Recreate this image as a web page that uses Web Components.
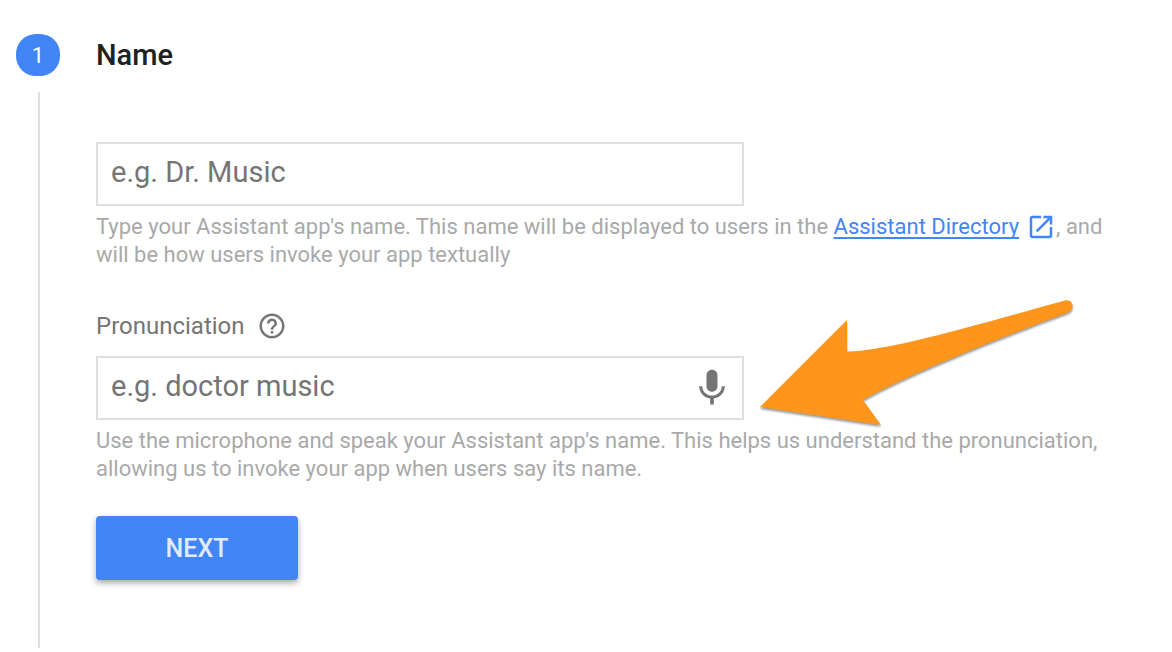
<!DOCTYPE html>
<html lang="en">
<head>
<meta charset="utf-8">
<meta name="viewport" content="width=device-width, initial-scale=1">
<title>Name</title>
<style>
	body {
		margin: 0;
		background: #fff;
		color: #757575;
		font-family: Roboto, "Liberation Sans", sans-serif;
		--accent-color: #4285f4;
		--border-color: #e0e0e0;
		--hint-color: #a9a9a9;
	}
</style>
</head>
<body>

<setup-step number="1">
	<span slot="title">Name</span>

	<text-field placeholder="e.g. Dr. Music" label="Name">
		<span slot="hint">Type your Assistant app's name. This name will be displayed to users in the <external-link href="#directory">Assistant Directory</external-link>, and will be how users invoke your app textually</span>
	</text-field>

	<text-field placeholder="e.g. doctor music" label="Pronunciation" show-label>
		<help-button slot="help"></help-button>
		<mic-button slot="action"></mic-button>
		<pointer-arrow slot="overlay"></pointer-arrow>
		<span slot="hint">Use the microphone and speak your Assistant app's name. This helps us understand the pronunciation, allowing us to invoke your app when users say its name.</span>
	</text-field>

	<raised-button>NEXT</raised-button>
</setup-step>

<script>
class BaseElement extends HTMLElement {

	constructor() {
		super();
		this.attachShadow({ mode: 'open' });
		this.shadowRoot.innerHTML = this.constructor.styles + this.template();
	}

	template() {
		return '<slot></slot>';
	}

}

class SetupStep extends BaseElement {

	static get styles() {
		return `
			<style>
				:host {
					display: grid;
					grid-template-columns: 44px minmax(0, 1fr);
					grid-template-rows: auto 1fr;
					column-gap: 36px;
					row-gap: 16px;
					min-height: 100vh;
					box-sizing: border-box;
					padding: 34px 56px 4px 16px;
				}
				.badge {
					display: flex;
					align-items: center;
					justify-content: center;
					height: 42px;
					border-radius: 20px;
					background: var(--accent-color);
					color: #fff;
					font-size: 22px;
				}
				h2 {
					margin: 0;
					align-self: center;
					color: #212121;
					font-size: 29px;
					line-height: 32px;
					font-weight: 500;
				}
				.rail {
					margin-left: 22px;
					border-left: 2px solid var(--border-color);
				}
				.content {
					display: flex;
					flex-direction: column;
					align-items: flex-start;
					gap: 33px;
					padding: 50px 0 64px;
				}
			</style>
		`;
	}

	template() {
		return `
			<div class="badge">${this.getAttribute('number')}</div>
			<h2><slot name="title"></slot></h2>
			<div class="rail"></div>
			<div class="content"><slot></slot></div>
		`;
	}

}

class TextField extends BaseElement {

	static get styles() {
		return `
			<style>
				:host {
					display: block;
					width: 100%;
				}
				.label {
					display: flex;
					align-items: center;
					gap: 12px;
					height: 48px;
					padding-bottom: 6px;
					font-size: 24px;
				}
				.box {
					position: relative;
					display: flex;
					align-items: center;
					max-width: 648px;
					height: 64px;
					box-sizing: border-box;
					border: 2px solid var(--border-color);
				}
				input {
					flex: 1;
					min-width: 0;
					height: 100%;
					box-sizing: border-box;
					padding: 0 13px 4px;
					border: 0;
					outline: 0;
					background: none;
					color: #212121;
					font-family: inherit;
					font-size: 29px;
				}
				input::placeholder {
					color: #757575;
					opacity: 1;
				}
				.hint {
					margin: 0;
					padding-top: 7px;
					color: var(--hint-color);
					font-size: 22px;
					line-height: 28px;
				}
			</style>
		`;
	}

	template() {
		const label = this.getAttribute('label');
		const visible = this.hasAttribute('show-label');

		return `
			${visible ? `<div class="label"><label for="input">${label}</label><slot name="help"></slot></div>` : ''}
			<div class="box">
				<input id="input" type="text" placeholder="${this.getAttribute('placeholder')}" ${visible ? '' : `aria-label="${label}"`}>
				<slot name="action"></slot>
				<slot name="overlay"></slot>
			</div>
			<p class="hint"><slot name="hint"></slot></p>
		`;
	}

}

class ExternalLink extends BaseElement {

	static get styles() {
		return `
			<style>
				:host {
					display: inline;
				}
				a {
					color: var(--accent-color);
					text-decoration: none;
				}
				span {
					text-decoration: underline;
					text-decoration-thickness: 2px;
					text-underline-offset: 3px;
					text-decoration-skip-ink: none;
				}
				svg {
					width: 30px;
					height: 30px;
					margin: -4px 0 -4px 7px;
					vertical-align: -4px;
					fill: currentColor;
				}
			</style>
		`;
	}

	template() {
		return `<a href="${this.getAttribute('href')}"><span><slot></slot></span><svg viewBox="0 0 24 24" aria-hidden="true"><path d="M19 19H5V5h7V3H5c-1.11 0-2 .9-2 2v14c0 1.1.89 2 2 2h14c1.1 0 2-.9 2-2v-7h-2v7zM14 3v2h3.59l-9.83 9.83 1.41 1.41L19 6.41V10h2V3h-7z"/></svg></a>`;
	}

}

class IconButton extends BaseElement {

	static get styles() {
		return `
			<style>
				:host {
					display: flex;
				}
				button {
					display: flex;
					padding: 0;
					border: 0;
					background: none;
					color: #757575;
					cursor: pointer;
				}
				svg {
					width: ${this.size}px;
					height: ${this.size}px;
					fill: currentColor;
				}
			</style>
		`;
	}

	template() {
		const { label, path } = this.constructor;
		return `<button type="button" aria-label="${label}"><svg viewBox="0 0 24 24"><path d="${path}"/></svg></button>`;
	}

}

class HelpButton extends IconButton {
	static size = 30;
	static label = 'Help';
	static path = 'M11 18h2v-2h-2v2zm1-16C6.48 2 2 6.48 2 12s4.48 10 10 10 10-4.48 10-10S17.52 2 12 2zm0 18c-4.41 0-8-3.59-8-8s3.59-8 8-8 8 3.59 8 8-3.59 8-8 8zm0-14c-2.21 0-4 1.79-4 4h2c0-1.1.9-2 2-2s2 .9 2 2c0 2-3 1.75-3 5h2c0-2.25 3-2.5 3-5 0-2.21-1.79-4-4-4z';
}

class MicButton extends IconButton {
	static size = 44;
	static label = 'Record';
	static path = 'M12 14c1.66 0 2.99-1.34 2.99-3L15 5c0-1.66-1.34-3-3-3S9 3.34 9 5v6c0 1.66 1.34 3 3 3zm5.3-3c0 3-2.54 5.1-5.3 5.1S6.7 14 6.7 11H5c0 3.41 2.72 6.23 6 6.72V21h2v-3.28c3.28-.48 6-3.3 6-6.72h-1.7z';

	static get styles() {
		return super.styles + '<style>:host { padding-right: 8px; }</style>';
	}
}

// the arrow lies over the page, to the right of the box it points at
class PointerArrow extends BaseElement {

	static get styles() {
		return `
			<style>
				:host {
					position: absolute;
					left: 100%;
					top: -63px;
					margin-left: 13px;
					pointer-events: none;
				}
				svg {
					display: block;
					width: 326px;
					height: 140px;
					fill: #ff951b;
					filter: drop-shadow(0 2px 1px rgba(0, 0, 0, 0.4));
				}
			</style>
		`;
	}

	template() {
		return `
			<svg viewBox="0 0 326 140" aria-hidden="true">
				<path d="M5 112L92 25V56.500C130 56 200 36 310 5.500C318 4 321 14 313 17.500C215 54 145 84 108 105L126 130Z"/>
			</svg>
		`;
	}

}

class RaisedButton extends BaseElement {

	static get styles() {
		return `
			<style>
				:host {
					display: block;
				}
				button {
					min-width: 202px;
					height: 64px;
					padding: 0 32px;
					border: 0;
					border-radius: 4px;
					background: var(--accent-color);
					box-shadow: 0 3px 6px rgba(0, 0, 0, 0.35);
					color: rgba(255, 255, 255, 0.87);
					font-family: inherit;
					font-size: 25px;
					font-weight: 500;
					cursor: pointer;
				}
			</style>
		`;
	}

	template() {
		return '<button type="button"><slot></slot></button>';
	}

}

customElements.define("external-link", ExternalLink);
customElements.define("help-button", HelpButton);
customElements.define("mic-button", MicButton);
customElements.define("pointer-arrow", PointerArrow);
customElements.define("raised-button", RaisedButton);
customElements.define("text-field", TextField);
customElements.define("setup-step", SetupStep);
</script>
</body>
</html>
